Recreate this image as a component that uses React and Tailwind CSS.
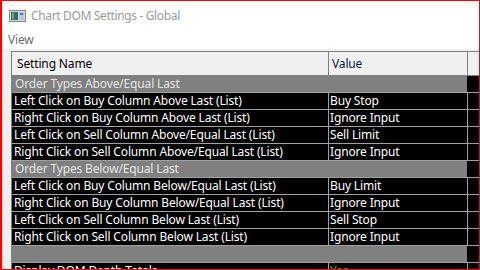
const ROWS = [
  { type: 'cat', name: 'Order Types Above/Equal Last' },
  { name: 'Left Click on Buy Column Above Last (List)', value: 'Buy Stop' },
  { name: 'Right Click on Buy Column Above Last (List)', value: 'Ignore Input' },
  { name: 'Left Click on Sell Column Above/Equal Last (List)', value: 'Sell Limit' },
  { name: 'Right Click on Sell Column Above/Equal Last (List)', value: 'Ignore Input' },
  { type: 'cat', name: 'Order Types Below/Equal Last' },
  { name: 'Left Click on Buy Column Below/Equal Last (List)', value: 'Buy Limit' },
  { name: 'Right Click on Buy Column Below/Equal Last (List)', value: 'Ignore Input' },
  { name: 'Left Click on Sell Column Below Last (List)', value: 'Sell Stop' },
  { name: 'Right Click on Sell Column Below Last (List)', value: 'Ignore Input' },
  { type: 'cat', name: '' },
  { name: 'Display DOM Depth Totals', value: 'Yes', green: true },
];

function WindowIcon() {
  return (
    <svg width="17" height="12" viewBox="0 0 17 12" className="shrink-0">
      <rect x="0.5" y="0.5" width="16" height="11" fill="#d8d8d8" stroke="#8a8a8a" />
      <rect x="2" y="2" width="7" height="8" fill="#2f6f5f" />
      <rect x="3" y="3" width="2" height="6" fill="#6fb08f" />
      <rect x="10" y="2" width="5" height="8" fill="#b9c7d6" />
      <rect x="11" y="3" width="3" height="2" fill="#4b7bb5" />
    </svg>
  );
}

function Row({ row }) {
  if (row.type === 'cat') {
    return (
      <div className="flex h-[17px] border-b border-[#a0a0a0]">
        <div className="w-[455px] bg-[#808080] text-[#e6e6e6] pl-[3px] leading-[16px]">{row.name}</div>
        <div className="flex-1 bg-black" />
      </div>
    );
  }
  return (
    <div className="flex h-[17px] border-b border-[#a0a0a0] bg-black text-white leading-[16px]">
      <div className="w-[316px] pl-[2px] whitespace-nowrap overflow-hidden">{row.name}</div>
      <div className={`w-[139px] border-l border-[#a0a0a0] pl-[1px] ${row.green ? 'text-[#22c322]' : ''}`}>{row.value}</div>
      <div className="flex-1 border-l border-[#a0a0a0]" />
    </div>
  );
}

export default function App() {
  return (
    <div
      className="w-[480px] h-[270px] overflow-hidden bg-white border-l-2 border-t border-r border-b border-[#ff0000] flex flex-col text-[12px] tracking-[-0.15px]"
      style={{ fontFamily: '"Noto Sans", "Open Sans", sans-serif' }}
    >
      <div className="h-[29px] shrink-0 flex items-center pl-[7px] gap-[5px]">
        <WindowIcon />
        <span className="text-[#9a9a9a] text-[12px] tracking-[-0.35px]">Chart DOM Settings - Global</span>
      </div>
      <div className="h-[19px] shrink-0 pl-[6px] text-[#6b6b6b] leading-[19px]">View</div>
      <div className="flex-1 bg-[#f0f0f0] pl-[9px] pt-[2px] overflow-hidden">
        <div className="border-l border-t border-[#808080]">
          <div className="flex h-[24px] border-b border-[#808080] bg-[#f0f0f0] text-black leading-[23px]">
            <div className="w-[316px] pl-[5px]">Setting Name</div>
            <div className="w-[139px] border-l border-[#808080] pl-[3px] text-[#0b1633]">Value</div>
            <div className="flex-1 border-l border-[#808080]" />
          </div>
          {ROWS.map((r, i) => (
            <Row key={i} row={r} />
          ))}
        </div>
      </div>
    </div>
  );
}
